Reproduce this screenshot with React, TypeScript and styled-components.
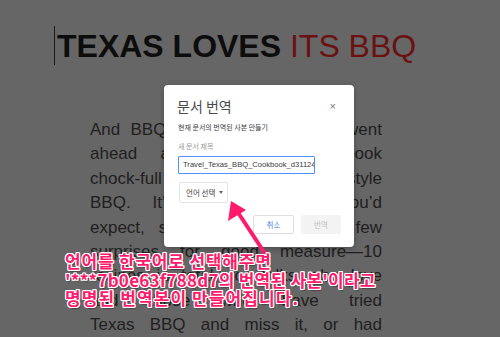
import React from "react";
import styled, { createGlobalStyle } from "styled-components";

const GlobalStyle = createGlobalStyle`
  html, body { margin: 0; padding: 0; background: #666666; }
  #root { width: 500px; height: 337px; }
`;

const Page = styled.div`
  position: relative;
  width: 500px;
  height: 337px;
  overflow: hidden;
  background: #666666;
  font-family: "Liberation Sans", Arial, sans-serif;
`;

const Doc = styled.div`
  display: flex;
  flex-direction: column;
  padding-top: 27px;
`;

const TitleRow = styled.div`
  display: flex;
  align-items: stretch;
  padding-left: 54px;
  height: 38px;
`;

const Caret = styled.span`
  width: 1px;
  background: #1a1a1a;
  margin-right: 2px;
  margin-top: -1px;
`;

const TitleText = styled.h1`
  margin: 0;
  font-size: 32px;
  line-height: 38px;
  font-weight: 400;
  white-space: nowrap;
  color: #0d0d0d;
`;

const Strong = styled.span`
  font-weight: 700;
  color: #0d0d0d;
`;

const Red = styled.span`
  color: #6a1212;
`;

const Body = styled.div`
  margin-top: 53px;
  margin-left: 90px;
  width: 292px;
  font-size: 17px;
  line-height: 24.4px;
  color: #202020;
`;

const Line = styled.div`
  text-align: justify;
  text-align-last: justify;
  white-space: nowrap;
`;

const Dialog = styled.div`
  position: absolute;
  left: 164px;
  top: 85px;
  width: 190px;
  height: 162px;
  box-sizing: border-box;
  padding: 11px 14px 0 14px;
  background: #ffffff;
  border-radius: 4px;
  box-shadow: 0 2px 6px rgba(0, 0, 0, 0.25);
  display: flex;
  flex-direction: column;
  font-family: "Noto Sans CJK KR", "Liberation Sans", sans-serif;
`;

const Header = styled.div`
  display: flex;
  align-items: center;
  justify-content: space-between;
  height: 20px;
`;

const DialogTitle = styled.div`
  font-size: 14px;
  line-height: 20px;
  color: #4a4a4a;
  margin-left: -1px;
`;

const Close = styled.div`
  font-family: "Liberation Sans", Arial, sans-serif;
  font-size: 11px;
  line-height: 10px;
  color: #7a7a7a;
  margin-right: 4px;
`;

const Sub = styled.div<{ $muted?: boolean; $mt: number }>`
  font-size: 7px;
  line-height: 10px;
  margin-top: ${(p) => p.$mt}px;
  color: ${(p) => (p.$muted ? "#9a9a9a" : "#3c3c3c")};
`;

const Input = styled.div`
  margin-top: 5px;
  width: 137px;
  height: 18px;
  box-sizing: border-box;
  border: 1px solid #4d90fe;
  border-radius: 1px;
  padding: 0 0 0 4px;
  overflow: hidden;
  white-space: nowrap;
  font-family: "Liberation Sans", Arial, sans-serif;
  font-size: 7.6px;
  line-height: 16px;
  color: #3a3a3a;
`;

const Select = styled.div`
  margin-top: 8px;
  margin-left: 1px;
  width: 49px;
  height: 21px;
  box-sizing: border-box;
  border: 1px solid #e3e3e3;
  border-radius: 2px;
  display: flex;
  align-items: center;
  padding-left: 6px;
  gap: 4px;
  font-size: 7.5px;
  color: #444444;
`;

const CaretDown = styled.span`
  width: 0;
  height: 0;
  border-left: 2.5px solid transparent;
  border-right: 2.5px solid transparent;
  border-top: 3px solid #666666;
`;

const Buttons = styled.div`
  margin-top: 12px;
  margin-right: -1px;
  display: flex;
  justify-content: flex-end;
  gap: 7px;
`;

const Button = styled.div<{ $primary?: boolean }>`
  width: ${(p) => (p.$primary ? 40 : 41)}px;
  height: 19px;
  box-sizing: border-box;
  border-radius: 2px;
  display: flex;
  align-items: center;
  justify-content: center;
  font-size: 7.5px;
  border: 1px solid ${(p) => (p.$primary ? "#f3f3f3" : "#dedede")};
  background: ${(p) => (p.$primary ? "#f3f3f3" : "#ffffff")};
  color: ${(p) => (p.$primary ? "#c2c2c2" : "#4a86e8")};
`;

const Note = styled.div`
  position: absolute;
  left: 65px;
  top: 252px;
  font-family: "Noto Sans CJK KR", sans-serif;
  font-weight: 700;
  font-size: 17px;
  line-height: 18.5px;
  color: #ff1a6b;
  white-space: nowrap;
  text-shadow:
    1px 0 0 #fff, -1px 0 0 #fff, 0 1px 0 #fff, 0 -1px 0 #fff,
    1px 1px 0 #fff, -1px -1px 0 #fff, 1px -1px 0 #fff, -1px 1px 0 #fff,
    1.5px 1.5px 1px rgba(0, 0, 0, 0.35);
`;

const NoteLine = styled.div<{ $spacing: number }>`
  letter-spacing: ${(p) => p.$spacing}px;
`;

const Arrow = styled.svg`
  position: absolute;
  left: 0;
  top: 0;
  width: 500px;
  height: 337px;
  pointer-events: none;
`;

export default function App() {
  const lines = [
    "And BBQ is so good that we went",
    "ahead and wrote a cookbook",
    "chock-full of Texas-style",
    "BBQ. It’s got everything you’d",
    "expect, such as ribs, plus a few",
    "surprises for good measure—10",
    "recipes in total, for folks who love",
    "and those who have tried",
    "Texas BBQ and miss it, or had",
  ];
  return (
    <>
      <GlobalStyle />
      <Page>
        <Doc>
          <TitleRow>
            <Caret />
            <TitleText>
              <Strong>TEXAS LOVES </Strong>
              <Red>ITS BBQ</Red>
            </TitleText>
          </TitleRow>
          <Body>
            {lines.map((l, i) => (
              <Line key={i}>{l}</Line>
            ))}
          </Body>
        </Doc>

        <Dialog>
          <Header>
            <DialogTitle>문서 번역</DialogTitle>
            <Close>×</Close>
          </Header>
          <Sub $mt={6}>현재 문서의 번역된 사본 만들기</Sub>
          <Sub $mt={9} $muted>
            새 문서 제목
          </Sub>
          <Input>Travel_Texas_BBQ_Cookbook_d31124b7b0e63f788d7</Input>
          <Select>
            언어 선택 <CaretDown />
          </Select>
          <Buttons>
            <Button>취소</Button>
            <Button $primary>번역</Button>
          </Buttons>
        </Dialog>

        <Arrow viewBox="0 0 500 337">
          <line x1="266" y1="255" x2="237" y2="211" stroke="#ff1a6b" strokeWidth="4" strokeLinecap="round" />
          <polygon points="231,201 228,221 246,210" fill="#ff1a6b" />
        </Arrow>

        <Note>
          <NoteLine $spacing={0.8}>언어를 한국어로 선택해주면</NoteLine>
          <NoteLine $spacing={0.25}>'***7b0e63f788d7의 번역된 사본'이라고</NoteLine>
          <NoteLine $spacing={1.1}>명명된 번역본이 만들어집니다.</NoteLine>
        </Note>
      </Page>
    </>
  );
}
